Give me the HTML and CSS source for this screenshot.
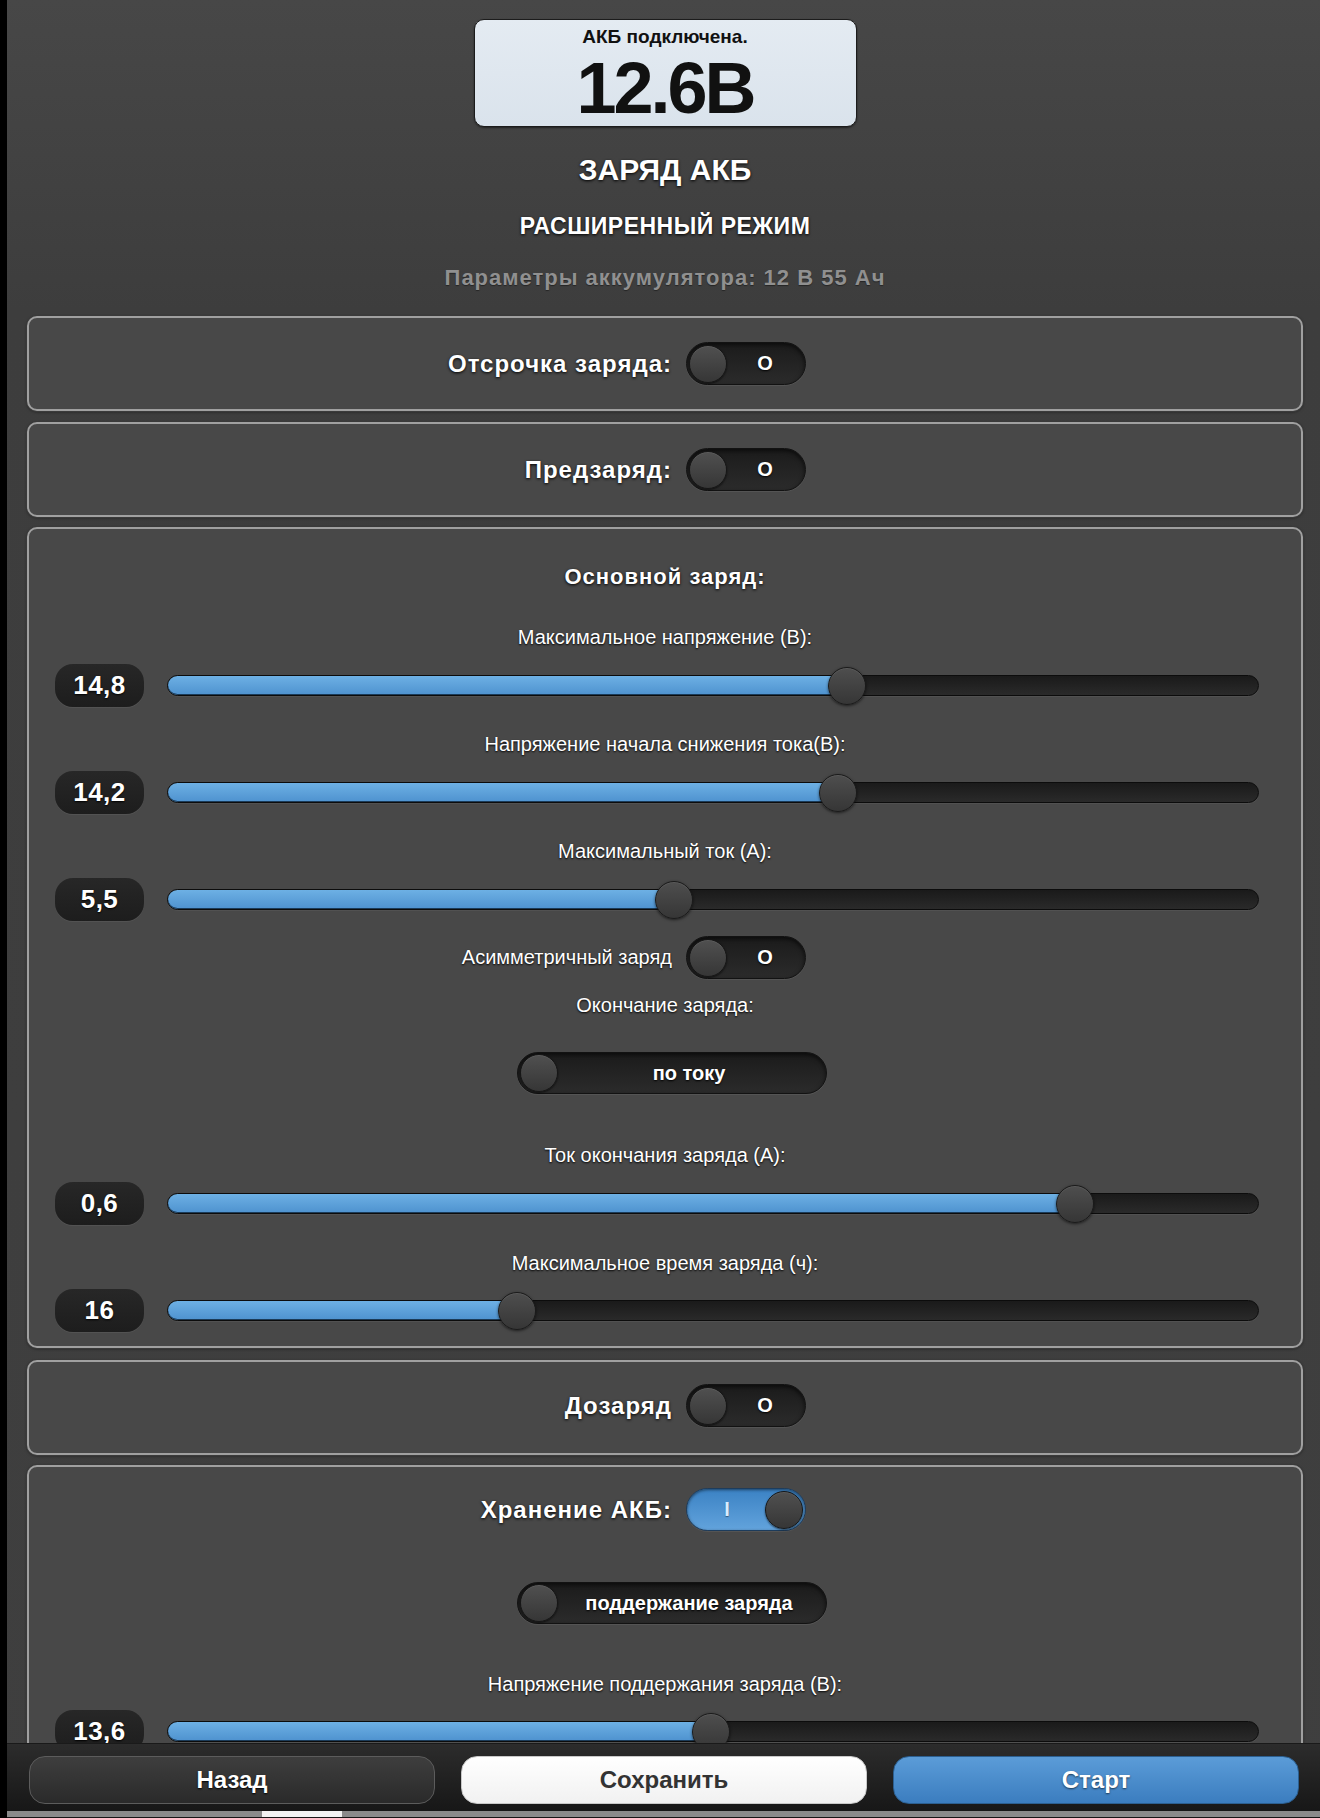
FILE: index.html
```html
<!DOCTYPE html>
<html lang="ru">
<head>
<meta charset="utf-8">
<title>Заряд АКБ</title>
<link rel="stylesheet" href="styles.css">
</head>
<body>
<main class="page">
  <div class="status">
    <div class="status-label">АКБ подключена.</div>
    <div class="status-value">12.6В</div>
  </div>
  <h1 class="title">ЗАРЯД АКБ</h1>
  <h2 class="subtitle">РАСШИРЕННЫЙ РЕЖИМ</h2>
  <p class="params">Параметры аккумулятора: 12 В 55 Ач</p>

  <section class="card card-toggle">
    <div class="toggle-row">
      <span class="toggle-label">Отсрочка заряда:</span>
      <span class="switch"><span class="knob"></span><span class="switch-text">O</span></span>
    </div>
  </section>

  <section class="card card-toggle">
    <div class="toggle-row">
      <span class="toggle-label">Предзаряд:</span>
      <span class="switch"><span class="knob"></span><span class="switch-text">O</span></span>
    </div>
  </section>

  <section class="card card-main">
    <h3 class="card-title">Основной заряд:</h3>

    <div class="slider-label first">Максимальное напряжение (В):</div>
    <div class="slider">
      <div class="badge">14,8</div>
      <div class="track"><div class="fill" style="width:62.3%"><span class="thumb"></span></div></div>
    </div>

    <div class="slider-label">Напряжение начала снижения тока(В):</div>
    <div class="slider">
      <div class="badge">14,2</div>
      <div class="track"><div class="fill" style="width:61.5%"><span class="thumb"></span></div></div>
    </div>

    <div class="slider-label">Максимальный ток (А):</div>
    <div class="slider">
      <div class="badge">5,5</div>
      <div class="track"><div class="fill" style="width:46.4%"><span class="thumb"></span></div></div>
    </div>

    <div class="toggle-row small">
      <span class="toggle-label plain">Асимметричный заряд</span>
      <span class="switch"><span class="knob"></span><span class="switch-text">O</span></span>
    </div>

    <div class="slider-label end-label">Окончание заряда:</div>
    <div class="wide-wrap">
      <span class="switch wide"><span class="knob"></span><span class="switch-text">по току</span></span>
    </div>

    <div class="slider-label after-wide">Ток окончания заряда (А):</div>
    <div class="slider">
      <div class="badge">0,6</div>
      <div class="track"><div class="fill" style="width:83.2%"><span class="thumb"></span></div></div>
    </div>

    <div class="slider-label tight">Максимальное время заряда (ч):</div>
    <div class="slider last">
      <div class="badge">16</div>
      <div class="track"><div class="fill" style="width:32%"><span class="thumb"></span></div></div>
    </div>
  </section>

  <section class="card card-dozaryad">
    <div class="toggle-row">
      <span class="toggle-label">Дозаряд</span>
      <span class="switch"><span class="knob"></span><span class="switch-text">O</span></span>
    </div>
  </section>

  <section class="card card-storage">
    <div class="toggle-row">
      <span class="toggle-label">Хранение АКБ:</span>
      <span class="switch on"><span class="knob"></span><span class="switch-text">I</span></span>
    </div>
    <div class="wide-wrap storage-mode">
      <span class="switch wide"><span class="knob"></span><span class="switch-text">поддержание заряда</span></span>
    </div>
    <div class="slider-label after-storage">Напряжение поддержания заряда (В):</div>
    <div class="slider">
      <div class="badge">13,6</div>
      <div class="track"><div class="fill" style="width:49.8%"><span class="thumb"></span></div></div>
    </div>
  </section>
</main>

<footer class="bar">
  <div class="buttons">
    <button class="btn btn-back">Назад</button>
    <button class="btn btn-save">Сохранить</button>
    <button class="btn btn-start">Старт</button>
  </div>
  <div class="strip"><span class="strip-thumb"></span></div>
</footer>
</body>
</html>
```
FILE: styles.css
```css
* { box-sizing: border-box; }

html { background: #404040; }

body {
  margin: 0;
  min-height: 100vh;
  border-left: 7px solid #000;
  background: linear-gradient(#474747 0, #3d3d3d 310px, #3f3f3f 100%);
  font-family: "Liberation Sans", Arial, sans-serif;
  color: #fff;
}

.page {
  padding: 19px 17px 140px 20px;
}

/* status box */
.status {
  width: 383px;
  height: 108px;
  margin: 0 auto;
  background: linear-gradient(#e4ebf2, #dae3ec);
  border: 1px solid #1c1c1c;
  border-radius: 10px;
  color: #111;
  text-align: center;
  box-shadow: 0 1px 2px rgba(0,0,0,0.5);
  overflow: hidden;
}
.status-label {
  padding-top: 6px;
  font-size: 19px;
  line-height: 22px;
  font-weight: bold;
}
.status-value {
  margin-top: -1px;
  font-size: 72px;
  line-height: normal;
  font-weight: bold;
  letter-spacing: -3px;
}

.title,
.subtitle,
.params {
  margin: 0;
  text-align: center;
  font-weight: bold;
}
.title {
  margin-top: 25px;
  font-size: 30px;
  line-height: 36px;
  text-shadow: 0 1px 3px #000;
}
.subtitle {
  margin-top: 23px;
  font-size: 23px;
  line-height: 30px;
  letter-spacing: 0.5px;
  text-shadow: 0 1px 3px #000;
}
.params {
  margin-top: 23px;
  font-size: 22px;
  line-height: 28px;
  letter-spacing: 1px;
  color: #909090;
  text-shadow: 0 1px 1px rgba(0,0,0,0.4);
}

/* cards */
.card {
  background: #484848;
  border: 2px solid #a0a0a0;
  border-radius: 10px;
  box-shadow: 0 0 0 1px #3a3a3a, 0 1px 3px rgba(0,0,0,0.5);
  margin-top: 11px;
}
.params + .card { margin-top: 24px; }
.card-toggle { padding: 24px 0; }
.card-main { margin-top: 10px; padding: 33px 0 14px; }
.card-dozaryad { margin-top: 12px; padding: 22px 0 26px; }
.card-storage { margin-top: 10px; padding: 21px 0 60px; }

.toggle-row {
  display: grid;
  grid-template-columns: 1fr 1fr;
  column-gap: 14px;
  align-items: center;
  padding-left: 28px;
}
.toggle-row.small { margin-top: 15px; }
.toggle-label {
  text-align: right;
  font-size: 24px;
  font-weight: bold;
  letter-spacing: 1px;
  text-shadow: 0 1px 3px #000;
}
.toggle-label.plain {
  font-size: 20px;
  font-weight: normal;
  letter-spacing: 0;
  text-shadow: 0 1px 2px #000;
}

/* switches */
.switch {
  display: flex;
  align-items: center;
  width: 120px;
  height: 43px;
  padding: 0 2px;
  border-radius: 22px;
  background: linear-gradient(#1b1b1b, #2b2b2b);
  border: 1px solid #121212;
  box-shadow: inset 0 2px 4px rgba(0,0,0,0.6), 0 1px 0 rgba(255,255,255,0.07);
}
.knob {
  flex: none;
  width: 38px;
  height: 38px;
  border-radius: 50%;
  background: linear-gradient(#505050, #363636);
  border: 1px solid #161616;
  box-shadow: 0 1px 2px rgba(0,0,0,0.6), inset 0 1px 0 rgba(255,255,255,0.08);
}
.switch-text {
  flex: 1;
  text-align: center;
  font-size: 20px;
  font-weight: bold;
  text-shadow: 0 1px 2px #000;
}
.switch.on {
  flex-direction: row-reverse;
  background: linear-gradient(#3b82c4, #62a3dc);
  border-color: #1d3c5c;
  box-shadow: inset 0 1px 3px rgba(0,0,0,0.5), 0 1px 0 rgba(255,255,255,0.07);
}
.switch.on .switch-text {
  color: #d8ecff;
  text-shadow: 0 1px 1px rgba(0,0,0,0.4);
}
.switch.wide {
  width: 310px;
  height: 42px;
}
.switch.wide .switch-text {
  padding-right: 4px;
}

.wide-wrap {
  display: flex;
  justify-content: center;
  padding-left: 14px;
  margin-top: 35px;
}
.wide-wrap.storage-mode { margin-top: 51px; }

/* main card contents */
.card-title {
  margin: 0;
  text-align: center;
  font-size: 22px;
  line-height: 30px;
  letter-spacing: 1px;
  font-weight: bold;
  text-shadow: 0 1px 3px #000;
}
.slider-label {
  margin-top: 25px;
  text-align: center;
  font-size: 20px;
  line-height: 24px;
  text-shadow: 0 1px 2px #000;
}
.slider-label.first { margin-top: 33px; }
.slider-label.end-label { margin-top: 14px; }
.slider-label.after-wide { margin-top: 49px; }
.slider-label.tight { margin-top: 26px; }
.slider-label.after-storage { margin-top: 48px; }

.slider {
  display: grid;
  grid-template-columns: 89px 1fr;
  column-gap: 23px;
  align-items: center;
  margin-top: 15px;
  padding: 0 42px 0 26px;
}
.slider.last { margin-top: 14px; }
.card-storage .slider { margin-top: 14px; }

.badge {
  display: flex;
  align-items: center;
  justify-content: center;
  height: 43px;
  border-radius: 18px;
  background: linear-gradient(#272727, #1d1d1d);
  box-shadow: 0 1px 0 rgba(255,255,255,0.06);
  font-size: 26px;
  font-weight: bold;
  letter-spacing: 0.5px;
  text-shadow: 0 1px 2px #000;
}

.track {
  display: flex;
  height: 21px;
  border-radius: 11px;
  background: linear-gradient(#1a1a1a, #2a2a2a);
  border: 1px solid #0c0c0c;
  box-shadow: 0 1px 0 rgba(255,255,255,0.05);
}
.fill {
  position: relative;
  height: 100%;
  border-radius: 10px 0 0 10px;
  background: linear-gradient(#6db0e4, #4e92cf);
  box-shadow: inset 0 -1px 0 #1b3b58;
}
.thumb {
  position: absolute;
  top: 50%;
  right: -19px;
  width: 38px;
  height: 38px;
  margin-top: -19px;
  border-radius: 50%;
  background: linear-gradient(#4e4e4e, #363636);
  border: 1px solid #1a1a1a;
  box-shadow: 0 1px 3px rgba(0,0,0,0.6), inset 0 1px 0 rgba(255,255,255,0.08);
}

/* footer */
.bar {
  position: fixed;
  left: 7px;
  right: 0;
  bottom: 0;
  height: 75px;
  background: linear-gradient(#2c2c2c, #151515);
  border-top: 1px solid #1a1a1a;
}
.buttons {
  display: grid;
  grid-template-columns: repeat(3, 1fr);
  column-gap: 26px;
  padding: 12px 21px 7px 22px;
}
.btn {
  height: 48px;
  border-radius: 16px;
  font-family: "Liberation Sans", Arial, sans-serif;
  font-size: 24px;
  font-weight: bold;
  cursor: pointer;
}
.btn-back {
  background: linear-gradient(#3e3e3e, #2a2a2a);
  border: 1px solid #5c5c5c;
  color: #fff;
  text-shadow: 0 1px 2px #000;
}
.btn-save {
  background: linear-gradient(#ffffff, #f1f1f1);
  border: 1px solid #c8c8c8;
  color: #333;
}
.btn-start {
  background: linear-gradient(#5b9cd8, #3b7dbf);
  border: 1px solid #2c5f90;
  color: #fff;
  text-shadow: 0 1px 2px rgba(0,0,0,0.6);
}
.strip {
  display: flex;
  height: 6px;
  background: #8a8a8a;
}
.strip-thumb {
  width: 80px;
  margin-left: 255px;
  background: #f2f2f2;
}
```
